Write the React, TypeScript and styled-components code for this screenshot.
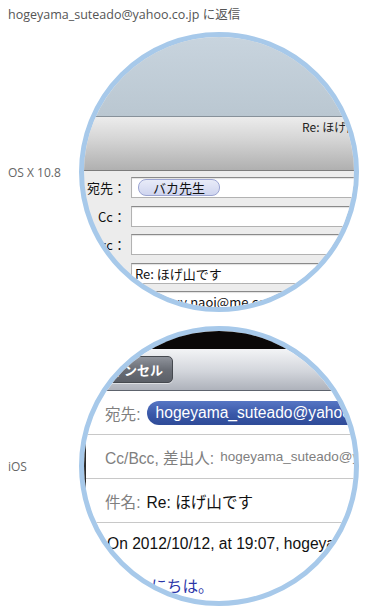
import React from 'react';
import styled, { createGlobalStyle } from 'styled-components';

const GlobalStyle = createGlobalStyle`
  html, body {
    margin: 0;
    padding: 0;
    background: #ffffff;
  }
  body {
    font-family: "Open Sans", "Noto Sans CJK JP", sans-serif;
  }
`;

export default function App() {
  return (
    <>
      <GlobalStyle />
      <Page>
        <Heading>hogeyama_suteado@yahoo.co.jp に返信</Heading>

        <Section>
          <Caption>OS X 10.8</Caption>
          <Lens background="#ececec">
            <Sky />
            <MacToolbar>
              <WindowTitle>Re: ほげ山です</WindowTitle>
            </MacToolbar>
            <MacForm>
              <MacLabel>宛先：</MacLabel>
              <MacField>
                <Token>バカ先生</Token>
              </MacField>
              <MacLabel>Cc：</MacLabel>
              <MacField />
              <MacLabel>Bcc：</MacLabel>
              <MacField />
              <MacLabel>件名：</MacLabel>
              <MacField>Re: ほげ山です</MacField>
              <MacLabel>差出人：</MacLabel>
              <MacField inset={20}>kazuy.naoi@me.com</MacField>
            </MacForm>
          </Lens>
        </Section>

        <Section>
          <Caption>iOS</Caption>
          <Lens background="#ffffff">
            <StatusBand />
            <NavBar>
              <CancelButton>キャンセル</CancelButton>
            </NavBar>
            <Sheet>
              <Row>
                <RowLabel>宛先:</RowLabel>
                <Recipient>hogeyama_suteado@yahoo.co.jp</Recipient>
              </Row>
              <Row>
                <RowLabel>Cc/Bcc, 差出人:</RowLabel>
                <RowValue muted>hogeyama_suteado@yahoo.co.jp</RowValue>
              </Row>
              <Row>
                <RowLabel>件名:</RowLabel>
                <RowValue>Re: ほげ山です</RowValue>
              </Row>
              <Body>
                <Quote>On 2012/10/12, at 19:07, hogeyama_suteado@yahoo.co.jp wrote:</Quote>
                <Greeting>こんにちは。</Greeting>
              </Body>
            </Sheet>
          </Lens>
        </Section>
      </Page>
    </>
  );
}

const Page = styled.div`
  width: 366px;
  padding: 0 8px;
  box-sizing: border-box;
`;

const Heading = styled.div`
  height: 32px;
  line-height: 30px;
  font-size: 12.5px;
  color: #555555;
  white-space: nowrap;
`;

const Section = styled.div`
  display: grid;
  grid-template-columns: 71px 280px;
  align-items: center;
  margin-bottom: 14px;
`;

const Caption = styled.div`
  font-size: 12px;
  color: #666666;
`;

const Lens = styled.div<{ background: string }>`
  width: 280px;
  height: 280px;
  box-sizing: border-box;
  border: 5px solid #a7c9ea;
  border-radius: 50%;
  overflow: hidden;
  background: ${p => p.background};
  font-family: "Noto Sans CJK JP", sans-serif;
`;

/* OS X mail window */

const Sky = styled.div`
  height: 79px;
  background: linear-gradient(#c8d4de, #bac7d1);
  border-bottom: 1px solid #87919a;
`;

const MacToolbar = styled.div`
  height: 53px;
  padding-left: 218px;
  background: linear-gradient(#ececec, #d6d6d6 40%, #b0b0b0);
  border-bottom: 1px solid #7b7b7b;
`;

const WindowTitle = styled.div`
  font-size: 12px;
  line-height: 20px;
  color: #222222;
  white-space: nowrap;
`;

const MacForm = styled.div`
  display: grid;
  grid-template-columns: 42px 300px;
  grid-auto-rows: 21px;
  column-gap: 5px;
  row-gap: 7.5px;
  padding-top: 6px;
`;

const MacLabel = styled.div`
  justify-self: end;
  align-self: center;
  font-size: 13px;
  color: #111111;
  white-space: nowrap;
`;

const MacField = styled.div<{ inset?: number }>`
  display: flex;
  align-items: center;
  box-sizing: border-box;
  padding-left: ${p => p.inset ?? 3}px;
  background: #ffffff;
  border: 1px solid #b2b2b2;
  border-top-color: #8a8a8a;
  box-shadow: inset 0 1px 1px rgba(0, 0, 0, 0.12);
  font-size: 13px;
  color: #111111;
  white-space: nowrap;
`;

const Token = styled.span`
  display: inline-flex;
  align-items: center;
  height: 15px;
  margin-left: 3px;
  padding: 0 14px;
  border: 1px solid #9ca5d2;
  border-radius: 8px;
  background: linear-gradient(#e8ebf8, #cfd5ef);
  font-size: 13px;
  color: #111111;
`;

/* iOS mail sheet */

const StatusBand = styled.div`
  height: 18px;
  background: #0a0808;
`;

const NavBar = styled.div`
  display: flex;
  align-items: center;
  height: 41px;
  padding-left: 4px;
  background: linear-gradient(#f3f4f6, #d2d5db 55%, #aeb2bb);
  border-bottom: 1px solid #5d636d;
`;

const CancelButton = styled.div`
  display: flex;
  align-items: center;
  height: 27px;
  box-sizing: border-box;
  padding: 0 9px;
  border: 1px solid #45494f;
  border-radius: 5px;
  background: linear-gradient(#8f939b, #6a6e76 50%, #5b5f67);
  box-shadow: 0 1px 0 rgba(255, 255, 255, 0.5);
  color: #ffffff;
  font-size: 13px;
  font-weight: bold;
  white-space: nowrap;
`;

const Sheet = styled.div`
  border-left: 2px solid #2a2a2a;
  font-family: "Liberation Sans", "Noto Sans CJK JP", sans-serif;
  font-size: 15.6px;
`;

const Row = styled.div`
  display: flex;
  align-items: center;
  gap: 6px;
  height: 43px;
  padding-left: 19px;
  border-bottom: 1px solid #c8c8c8;
  white-space: nowrap;
`;

const RowLabel = styled.span`
  color: #7f7f7f;
`;

const RowValue = styled.span<{ muted?: boolean }>`
  color: ${p => (p.muted ? '#7f7f7f' : '#111111')};
  font-size: ${p => (p.muted ? '13.5px' : '15.6px')};
`;

const Recipient = styled.span`
  display: inline-flex;
  align-items: center;
  height: 24px;
  padding: 0 9px;
  border-radius: 12px;
  background: linear-gradient(#5676c4, #3a58a8 55%, #2f4b98);
  color: #ffffff;
  font-size: 15.6px;
`;

const Body = styled.div`
  padding: 11px 0 0 21px;
  line-height: 20px;
  white-space: nowrap;
`;

const Quote = styled.div`
  color: #111111;
`;

const Greeting = styled.div`
  margin-top: 23px;
  padding-left: 13px;
  color: #2b35a8;
`;
